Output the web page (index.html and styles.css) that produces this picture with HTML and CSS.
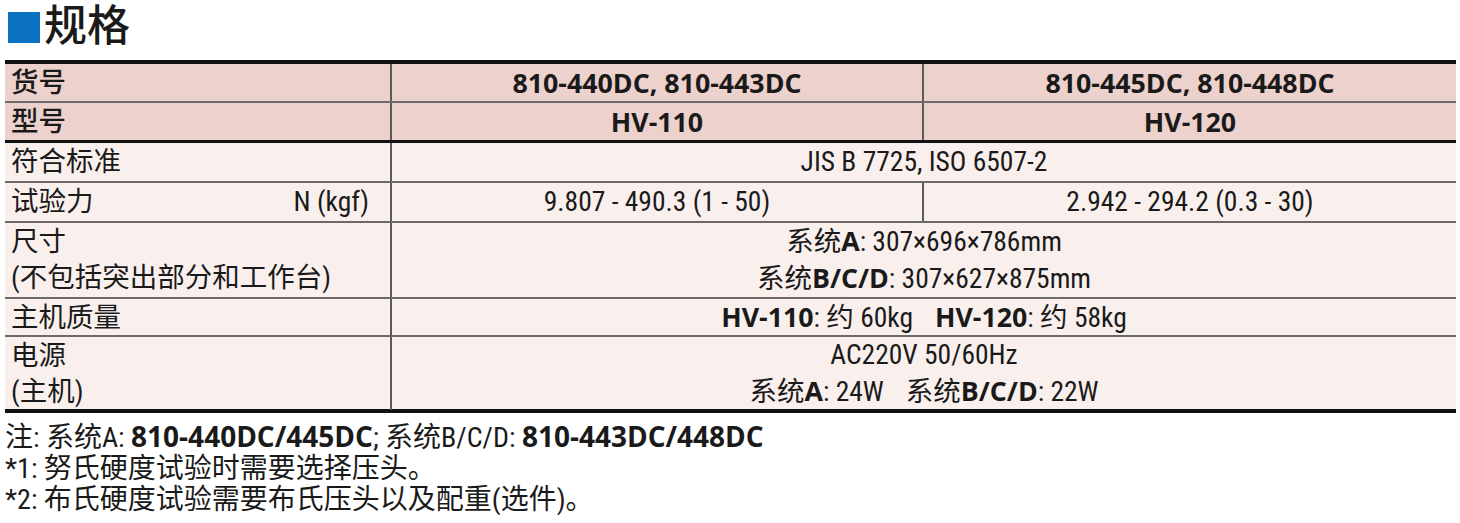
FILE: index.html
```html
<!DOCTYPE html>
<html lang="zh-CN">
<head>
<meta charset="utf-8">
<title>规格</title>
<link rel="stylesheet" href="styles.css">
</head>
<body>
<h1 class="title"><span class="sq"></span><span class="title-text">规格</span></h1>

<div class="spec">
  <div class="row head">
    <div class="cell label">货号</div>
    <div class="cell center strong">810-440DC, 810-443DC</div>
    <div class="cell center strong">810-445DC, 810-448DC</div>
  </div>
  <div class="row head last-head">
    <div class="cell label">型号</div>
    <div class="cell center strong">HV-110</div>
    <div class="cell center strong">HV-120</div>
  </div>
  <div class="row">
    <div class="cell label">符合标准</div>
    <div class="cell center span2">JIS B 7725, ISO 6507-2</div>
  </div>
  <div class="row">
    <div class="cell label split"><span>试验力</span><span class="unit">N (kgf)</span></div>
    <div class="cell center">9.807 - 490.3 (1 - 50)</div>
    <div class="cell center">2.942 - 294.2 (0.3 - 30)</div>
  </div>
  <div class="row double">
    <div class="cell label multi"><span>尺寸</span><span>(不包括突出部分和工作台)</span></div>
    <div class="cell center span2 multi"><span>系统<b>A</b>: 307×696×786mm</span><span>系统<b>B/C/D</b>: 307×627×875mm</span></div>
  </div>
  <div class="row short">
    <div class="cell label">主机质量</div>
    <div class="cell center span2"><span><b>HV-110</b>: 约 60kg<span class="gap"></span><b>HV-120</b>: 约 58kg</span></div>
  </div>
  <div class="row double last">
    <div class="cell label multi"><span>电源</span><span>(主机)</span></div>
    <div class="cell center span2 multi"><span>AC220V 50/60Hz</span><span>系统<b>A</b>: 24W<span class="gap"></span>系统<b>B/C/D</b>: 22W</span></div>
  </div>
</div>

<div class="notes">
  <p>注: 系统A: <b>810-440DC/445DC</b>; 系统B/C/D: <b>810-443DC/448DC</b></p>
  <p>*1: 努氏硬度试验时需要选择压头。</p>
  <p>*2: 布氏硬度试验需要布氏压头以及配重(选件)。</p>
</div>
</body>
</html>
```
FILE: styles.css
```css
html, body {
  margin: 0;
  padding: 0;
  background: #ffffff;
}

body {
  font-family: Roboto, "Noto Sans CJK SC", sans-serif;
  font-stretch: 75%;
  font-size: 27.5px;
  color: #1a1a1a;
}

b,
.strong {
  font-family: "Open Sans", "Noto Sans CJK SC", sans-serif;
  font-weight: 700;
  font-stretch: 100%;
}

.spec b,
.spec .strong {
  font-size: 26.75px;
}

.title {
  margin: 0;
  height: 60px;
  display: flex;
  align-items: flex-start;
  padding-left: 8px;
  box-sizing: border-box;
  font-weight: 500;
  font-size: 43px;
  line-height: 44px;
}

.sq {
  display: block;
  width: 32px;
  height: 31px;
  background: #0b72c2;
  margin-top: 12px;
  margin-right: 4px;
}

.title-text {
  font-family: "Noto Sans CJK SC", sans-serif;
}

.spec {
  margin: 0 4px 0 5px;
  border-top: 4px solid #111;
  border-bottom: 4px solid #111;
  background: #f9efec;
}

.row {
  display: grid;
  grid-template-columns: 385px 532px 1fr;
  height: 40px;
  box-sizing: border-box;
  border-bottom: 2px solid #6b6b6b;
}

.row.head {
  background: #edd1cc;
  height: 39px;
}

.row.last-head {
  height: 40px;
  border-bottom: 3px solid #111;
}

.row.short {
  height: 38px;
}

.row.double {
  height: 76px;
}

.row.last {
  height: 72px;
  border-bottom: none;
}

.cell {
  display: flex;
  align-items: center;
  line-height: 36px;
  white-space: nowrap;
  min-width: 0;
}

.cell + .cell {
  border-left: 2px solid #5a5a5a;
}

.label {
  padding-left: 6px;
}

.head .label {
  font-weight: 500;
}

.split {
  justify-content: space-between;
  padding-right: 21px;
}

.center {
  justify-content: center;
  text-align: center;
}

.span2 {
  grid-column: 2 / 4;
}

.multi {
  flex-direction: column;
  justify-content: center;
}

.label.multi {
  align-items: flex-start;
}

.center.multi {
  align-items: center;
}

.gap {
  display: inline-block;
  width: 22px;
}

.notes {
  padding: 8px 0 0 5px;
  font-size: 28px;
}

.notes p {
  margin: 0;
  line-height: 31px;
  white-space: nowrap;
}
```
